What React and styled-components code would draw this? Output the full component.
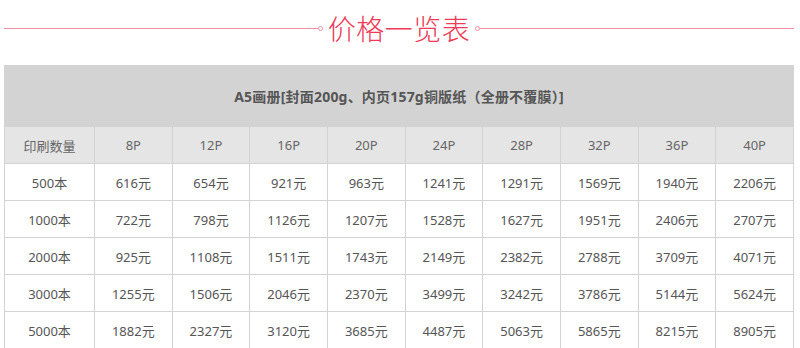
import React from "react";
import styled, { createGlobalStyle } from "styled-components";

const GlobalStyle = createGlobalStyle`
  body {
    margin: 0;
    background: #ffffff;
    font-family: "Noto Sans", "Noto Sans CJK SC", sans-serif;
  }
`;

const Page = styled.div`
  width: 790px;
  margin-left: 4px;
`;

const TitleBar = styled.div`
  height: 56px;
  display: flex;
  align-items: center;
  margin-bottom: 9px;
`;

const Line = styled.div`
  flex: 1;
  height: 1px;
  background: #f38fa4;
`;

const Dot = styled.span`
  width: 5px;
  height: 5px;
  box-sizing: border-box;
  border: 1px solid #f38fa4;
  border-radius: 50%;
  flex: none;
`;

const Title = styled.h2`
  margin: 0 5px;
  font-family: "Noto Sans CJK SC", sans-serif;
  font-weight: 300;
  font-size: 28px;
  line-height: 30px;
  color: #ee3a57;
  letter-spacing: 0.5px;
`;

const Table = styled.table`
  width: 790px;
  border-collapse: collapse;
  table-layout: fixed;
  font-size: 13px;
  color: #555;
`;

const Caption = styled.th`
  height: 60px;
  background: #d3d3d3;
  font-size: 14px;
  font-weight: bold;
  color: #555;
  text-align: center;
  padding: 0;
  letter-spacing: 0.2px;
  border: 1px solid #d3d3d3;
`;

const Cell = styled.td`
  height: 36px;
  padding: 0;
  text-align: center;
  border: 1px solid #d3d3d3;
  background: ${(p) => (p.$head ? "#e5e5e5" : "#ffffff")};
  color: ${(p) => (p.$head ? "#666" : "#555")};
`;

const pages = ["8P", "12P", "16P", "20P", "24P", "28P", "32P", "36P", "40P"];

const rows = [
  ["500本", 616, 654, 921, 963, 1241, 1291, 1569, 1940, 2206],
  ["1000本", 722, 798, 1126, 1207, 1528, 1627, 1951, 2406, 2707],
  ["2000本", 925, 1108, 1511, 1743, 2149, 2382, 2788, 3709, 4071],
  ["3000本", 1255, 1506, 2046, 2370, 3499, 3242, 3786, 5144, 5624],
  ["5000本", 1882, 2327, 3120, 3685, 4487, 5063, 5865, 8215, 8905],
];

export default function App() {
  return (
    <Page>
      <GlobalStyle />
      <TitleBar>
        <Line />
        <Dot />
        <Title>价格一览表</Title>
        <Dot />
        <Line />
      </TitleBar>
      <Table>
        <colgroup>
          <col style={{ width: 90 }} />
          {pages.map((p) => (
            <col key={p} />
          ))}
        </colgroup>
        <tbody>
          <tr>
            <Caption colSpan={10}>A5画册[封面200g、内页157g铜版纸（全册不覆膜）]</Caption>
          </tr>
          <tr>
            <Cell $head>印刷数量</Cell>
            {pages.map((p) => (
              <Cell $head key={p}>{p}</Cell>
            ))}
          </tr>
          {rows.map(([qty, ...prices]) => (
            <tr key={qty}>
              <Cell>{qty}</Cell>
              {prices.map((v, i) => (
                <Cell key={i}>{v}元</Cell>
              ))}
            </tr>
          ))}
        </tbody>
      </Table>
    </Page>
  );
}
